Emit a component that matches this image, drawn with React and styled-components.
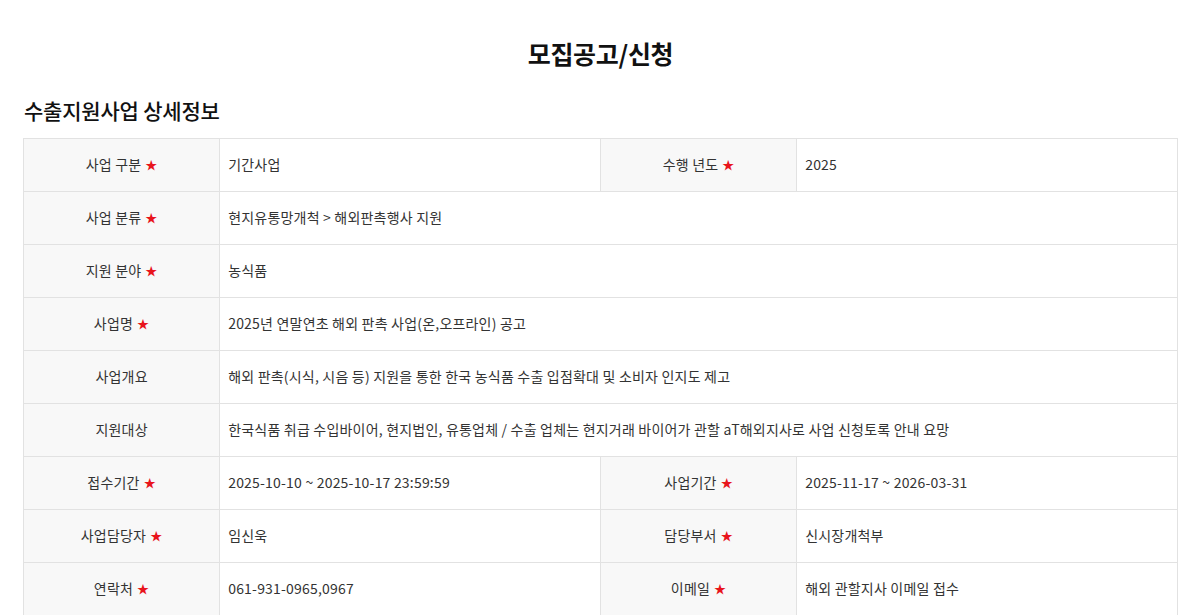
import React from "react";
import styled, { createGlobalStyle } from "styled-components";

const GlobalStyle = createGlobalStyle`
  html, body {
    margin: 0;
    padding: 0;
    background: #fff;
  }
  body {
    font-family: "Noto Sans CJK KR", "Noto Sans", sans-serif;
    color: #333;
  }
`;

const Page = styled.div`
  width: 100%;
  padding: 0 22px 0 23px;
  box-sizing: border-box;
`;

const PageTitle = styled.h1`
  margin: 0;
  padding-top: 35px;
  height: 72px;
  box-sizing: border-box;
  text-align: center;
  font-size: 25px;
  font-weight: 700;
  line-height: 36px;
  color: #111;
  letter-spacing: -0.3px;
`;

const SectionTitle = styled.h2`
  margin: 0;
  padding: 23px 0 0 1px;
  height: 66px;
  box-sizing: border-box;
  font-size: 21px;
  font-weight: 500;
  line-height: 30px;
  color: #111;
  letter-spacing: -0.2px;
`;

const Table = styled.table`
  width: 100%;
  border-collapse: collapse;
  table-layout: fixed;
  border: 1px solid #e2e2e2;
  font-size: 14px;
  letter-spacing: 0.2px;
`;

const Row = styled.tr`
  height: 53px;
`;

const Label = styled.th`
  background: #f8f8f8;
  border: 1px solid #e2e2e2;
  font-weight: 400;
  color: #333;
  text-align: center;
  padding: 0 10px 3px;
`;

const Value = styled.td`
  border: 1px solid #e2e2e2;
  padding: 0 8px 3px;
  color: #333;
  text-align: left;
`;

const Star = styled.span`
  color: #e8141c;
  font-size: 12px;
  margin-left: 4px;
`;

const Col = styled.col`
  width: ${({ $w }) => $w};
`;

const LabelCell = ({ children, required }) => (
  <Label>
    {children}
    {required && <Star>★</Star>}
  </Label>
);

const rows = [
  [
    { label: "사업 구분", req: true, value: "기간사업" },
    { label: "수행 년도", req: true, value: "2025" },
  ],
  [{ label: "사업 분류", req: true, value: "현지유통망개척 > 해외판촉행사 지원" }],
  [{ label: "지원 분야", req: true, value: "농식품" }],
  [{ label: "사업명", req: true, value: "2025년 연말연초 해외 판촉 사업(온,오프라인) 공고" }],
  [
    {
      label: "사업개요",
      value: "해외 판촉(시식, 시음 등) 지원을 통한 한국 농식품 수출 입점확대 및 소비자 인지도 제고",
    },
  ],
  [
    {
      label: "지원대상",
      value:
        "한국식품 취급 수입바이어, 현지법인, 유통업체 / 수출 업체는 현지거래 바이어가 관할 aT해외지사로 사업 신청토록 안내 요망",
    },
  ],
  [
    { label: "접수기간", req: true, value: "2025-10-10 ~ 2025-10-17 23:59:59" },
    { label: "사업기간", req: true, value: "2025-11-17 ~ 2026-03-31" },
  ],
  [
    { label: "사업담당자", req: true, value: "임신욱" },
    { label: "담당부서", req: true, value: "신시장개척부" },
  ],
  [
    { label: "연락처", req: true, value: "061-931-0965,0967" },
    { label: "이메일", req: true, value: "해외 관할지사 이메일 접수" },
  ],
];

export default function App() {
  return (
    <>
      <GlobalStyle />
      <Page>
        <PageTitle>모집공고/신청</PageTitle>
        <SectionTitle>수출지원사업 상세정보</SectionTitle>
        <Table>
          <colgroup>
            <Col $w="17%" />
            <Col $w="33%" />
            <Col $w="17%" />
            <Col $w="33%" />
          </colgroup>
          <tbody>
            {rows.map((cells, i) => (
              <Row key={i}>
                {cells.map((c) => (
                  <React.Fragment key={c.label}>
                    <LabelCell required={c.req}>{c.label}</LabelCell>
                    <Value colSpan={cells.length === 1 ? 3 : 1}>{c.value}</Value>
                  </React.Fragment>
                ))}
              </Row>
            ))}
          </tbody>
        </Table>
      </Page>
    </>
  );
}
